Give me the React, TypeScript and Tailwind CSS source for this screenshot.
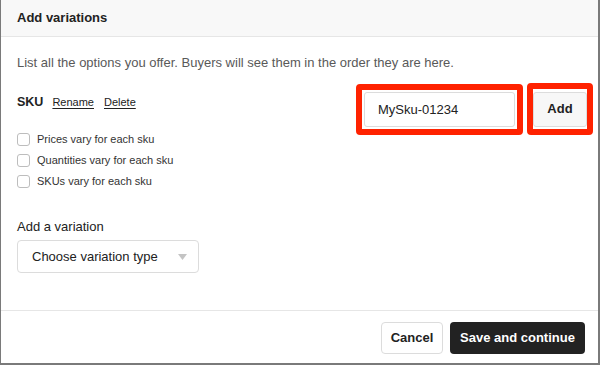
import { useState } from "react";

const skuOptions = [
  "Prices vary for each sku",
  "Quantities vary for each sku",
  "SKUs vary for each sku",
];

export default function App() {
  const [sku, setSku] = useState("MySku-01234");
  const [checked, setChecked] = useState<Set<number>>(new Set());

  const toggle = (index: number) => {
    setChecked((current) => {
      const next = new Set(current);
      if (next.has(index)) {
        next.delete(index);
      } else {
        next.add(index);
      }
      return next;
    });
  };

  return (
    <div className="flex h-[365px] w-[600px] flex-col border-b-2 border-l border-r-2 border-[#7a7a7a] bg-white font-['Liberation_Sans',Arial,sans-serif] text-[#222]">
      <header className="flex h-[37px] shrink-0 items-center border-b border-[#e6e6e6] bg-[#f8f8f8] px-4">
        <h1 className="text-[13px] font-bold text-[#222]">Add variations</h1>
      </header>

      <main className="flex-1 pl-4">
        <p className="mt-[18px] text-[13px] leading-4 text-[#595959]">
          List all the options you offer. Buyers will see them in the order they are here.
        </p>

        <div className="mt-[12px] flex items-start justify-between pr-[5px]">
          <div className="pt-[11px]">
            <div className="flex h-4 items-center">
              <span className="text-[12.5px] font-bold">SKU</span>
              <button className="ml-[9px] text-[11px] text-[#222] underline underline-offset-2">
                Rename
              </button>
              <button className="ml-[10px] text-[11px] text-[#222] underline underline-offset-2">
                Delete
              </button>
            </div>

            <ul className="mt-[19px]">
              {skuOptions.map((label, index) => (
                <li key={label} className="flex h-[21px] items-center">
                  <label className="flex cursor-pointer items-center">
                    <input
                      type="checkbox"
                      checked={checked.has(index)}
                      onChange={() => toggle(index)}
                      className="h-[13px] w-[13px] appearance-none rounded-[3px] border border-[#bdbdbd] bg-white checked:bg-[#222]"
                    />
                    <span className="ml-[7px] text-[11px] text-[#333]">{label}</span>
                  </label>
                </li>
              ))}
            </ul>
          </div>

          <div className="flex items-center">
            <div className="rounded-[4px] border-[6px] border-[#ff2200] p-[2px]">
              <input
                value={sku}
                onChange={(event) => setSku(event.target.value)}
                className="block h-[35px] w-[151px] rounded-[3px] border border-[#dcdcdc] bg-white pl-[13px] text-[13px] text-[#222] outline-none"
              />
            </div>
            <div className="ml-[4px] flex h-[52px] items-center rounded-[4px] border-[6px] border-[#ff2200]">
              <button className="h-[35px] w-[54px] rounded-[3px] border border-[#dcdcdc] bg-[#f7f7f7] text-[13px] font-bold text-[#222]">
                Add
              </button>
            </div>
          </div>
        </div>

        <h2 className="mt-[27px] text-[13px] leading-4 text-[#222]">Add a variation</h2>
        <button className="mt-[5px] flex h-[33px] w-[182px] items-center justify-between rounded-[4px] border border-[#dcdcdc] bg-white pl-[14px] pr-[11px] text-[13px] text-[#222]">
          Choose variation type
          <svg width="9" height="6" viewBox="0 0 9 6" aria-hidden="true">
            <path d="M0 0h9L4.5 6z" fill="#c4c4c4" />
          </svg>
        </button>
      </main>

      <footer className="flex shrink-0 justify-end gap-[7px] border-t border-[#e6e6e6] pb-[9px] pr-[13px] pt-[11px]">
        <button className="h-[32px] w-[62px] rounded-[4px] border border-[#dcdcdc] bg-white text-[13px] font-bold text-[#222]">
          Cancel
        </button>
        <button className="h-[32px] w-[135px] rounded-[4px] bg-[#222] text-[13px] font-bold text-white">
          Save and continue
        </button>
      </footer>
    </div>
  );
}
